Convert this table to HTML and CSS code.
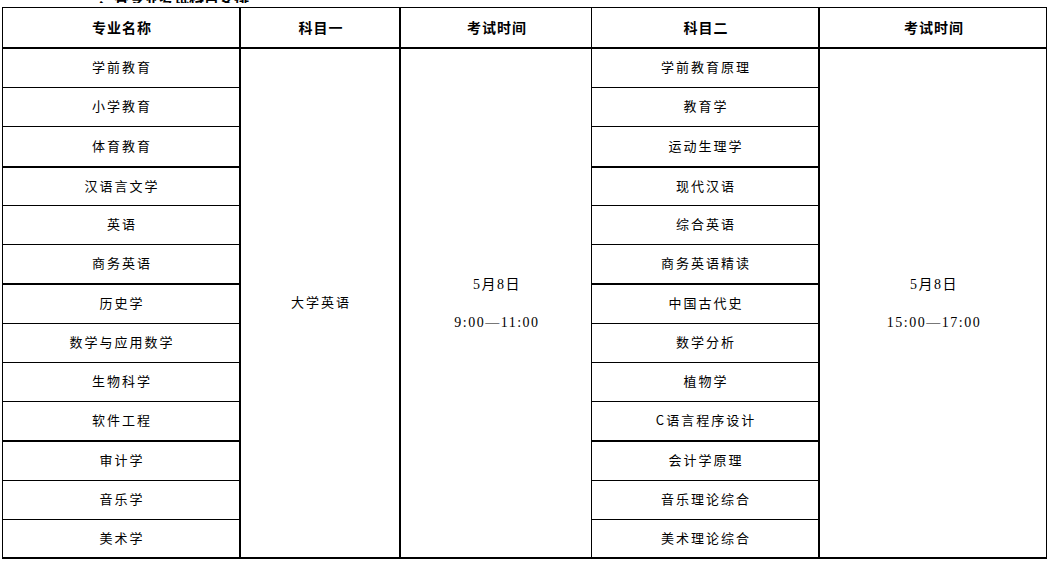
FILE: index.html
```html
<!DOCTYPE html>
<html lang="zh-CN">
<head>
<meta charset="utf-8">
<title>考试科目安排</title>
<link rel="stylesheet" href="styles.css">
</head>
<body>
<div class="caption"><span>二、各专业考试科目安排</span></div>
<div class="sheet">
  <div class="cell head c1">专业名称</div>
  <div class="cell head c2">科目一</div>
  <div class="cell head c3">考试时间</div>
  <div class="cell head c4">科目二</div>
  <div class="cell head c5">考试时间</div>

  <div class="cell c1 r1">学前教育</div>
  <div class="cell c1 r2">小学教育</div>
  <div class="cell c1 r3 thick">体育教育</div>
  <div class="cell c1 r4">汉语言文学</div>
  <div class="cell c1 r5">英语</div>
  <div class="cell c1 r6 thick">商务英语</div>
  <div class="cell c1 r7">历史学</div>
  <div class="cell c1 r8">数学与应用数学</div>
  <div class="cell c1 r9">生物科学</div>
  <div class="cell c1 r10 thick">软件工程</div>
  <div class="cell c1 r11">审计学</div>
  <div class="cell c1 r12">音乐学</div>
  <div class="cell c1 r13 thick">美术学</div>

  <div class="cell c2 span thick">大学英语</div>
  <div class="cell c3 span thick time">
    <span>5月8日</span>
    <span>9:00—11:00</span>
  </div>

  <div class="cell c4 r1">学前教育原理</div>
  <div class="cell c4 r2">教育学</div>
  <div class="cell c4 r3 thick">运动生理学</div>
  <div class="cell c4 r4">现代汉语</div>
  <div class="cell c4 r5">综合英语</div>
  <div class="cell c4 r6 thick">商务英语精读</div>
  <div class="cell c4 r7">中国古代史</div>
  <div class="cell c4 r8">数学分析</div>
  <div class="cell c4 r9">植物学</div>
  <div class="cell c4 r10 thick">C语言程序设计</div>
  <div class="cell c4 r11">会计学原理</div>
  <div class="cell c4 r12">音乐理论综合</div>
  <div class="cell c4 r13 thick">美术理论综合</div>

  <div class="cell c5 span thick time">
    <span>5月8日</span>
    <span>15:00—17:00</span>
  </div>
</div>
</body>
</html>
```

FILE: styles.css
```css
* { box-sizing: border-box; }

html, body {
  margin: 0;
  padding: 0;
  background: #fff;
}

body {
  color: #000;
  font-family: "Noto Sans CJK SC", "Noto Sans", sans-serif;
  padding-left: 2px;
}

.caption {
  height: 3px;
  overflow: hidden;
  display: flex;
  align-items: flex-end;
  padding-left: 82px;
  font-size: 15px;
  font-weight: bold;
  line-height: 15px;
  margin-bottom: 4px;
}

.caption span {
  display: block;
  margin-bottom: -2px;
}

.sheet {
  display: grid;
  width: 1045px;
  grid-template-columns: 238px 160px 191px 228px 227px;
  grid-template-rows: 41px 39px 39px 41px 38px 39px 40px 39px 39px 39px 40px 39px 39px 39px;
  border-top: 1px solid #000;
  border-left: 1px solid #000;
}

.cell {
  display: flex;
  align-items: center;
  justify-content: center;
  font-size: 13px;
  letter-spacing: 2px;
  border-bottom: 1px solid #000;
  border-right: 1px solid #000;
  padding-left: 2px;
  padding-bottom: 3px;
  white-space: nowrap;
}

.head {
  font-size: 14px;
  font-weight: bold;
  letter-spacing: 1px;
  border-bottom-width: 2px;
  padding-bottom: 1px;
}

.c1 { grid-column: 1; border-right-width: 2px; }
.c2 { grid-column: 2; border-right-width: 2px; }
.c3 { grid-column: 3; }
.c4 { grid-column: 4; border-right-width: 2px; }
.c5 { grid-column: 5; }

.thick { border-bottom-width: 2px; }

.r1 { grid-row: 2; }
.r2 { grid-row: 3; }
.r3 { grid-row: 4; }
.r4 { grid-row: 5; }
.r5 { grid-row: 6; }
.r6 { grid-row: 7; }
.r7 { grid-row: 8; }
.r8 { grid-row: 9; }
.r9 { grid-row: 10; }
.r10 { grid-row: 11; }
.r11 { grid-row: 12; }
.r12 { grid-row: 13; }
.r13 { grid-row: 14; }

.span { grid-row: 2 / 15; }

.time {
  flex-direction: column;
  gap: 20px;
  font-family: "Liberation Serif", "Noto Sans CJK SC", serif;
  font-size: 14px;
  letter-spacing: 1.5px;
  padding-top: 2px;
  padding-bottom: 0;
}

.time span {
  line-height: 18px;
}
```
